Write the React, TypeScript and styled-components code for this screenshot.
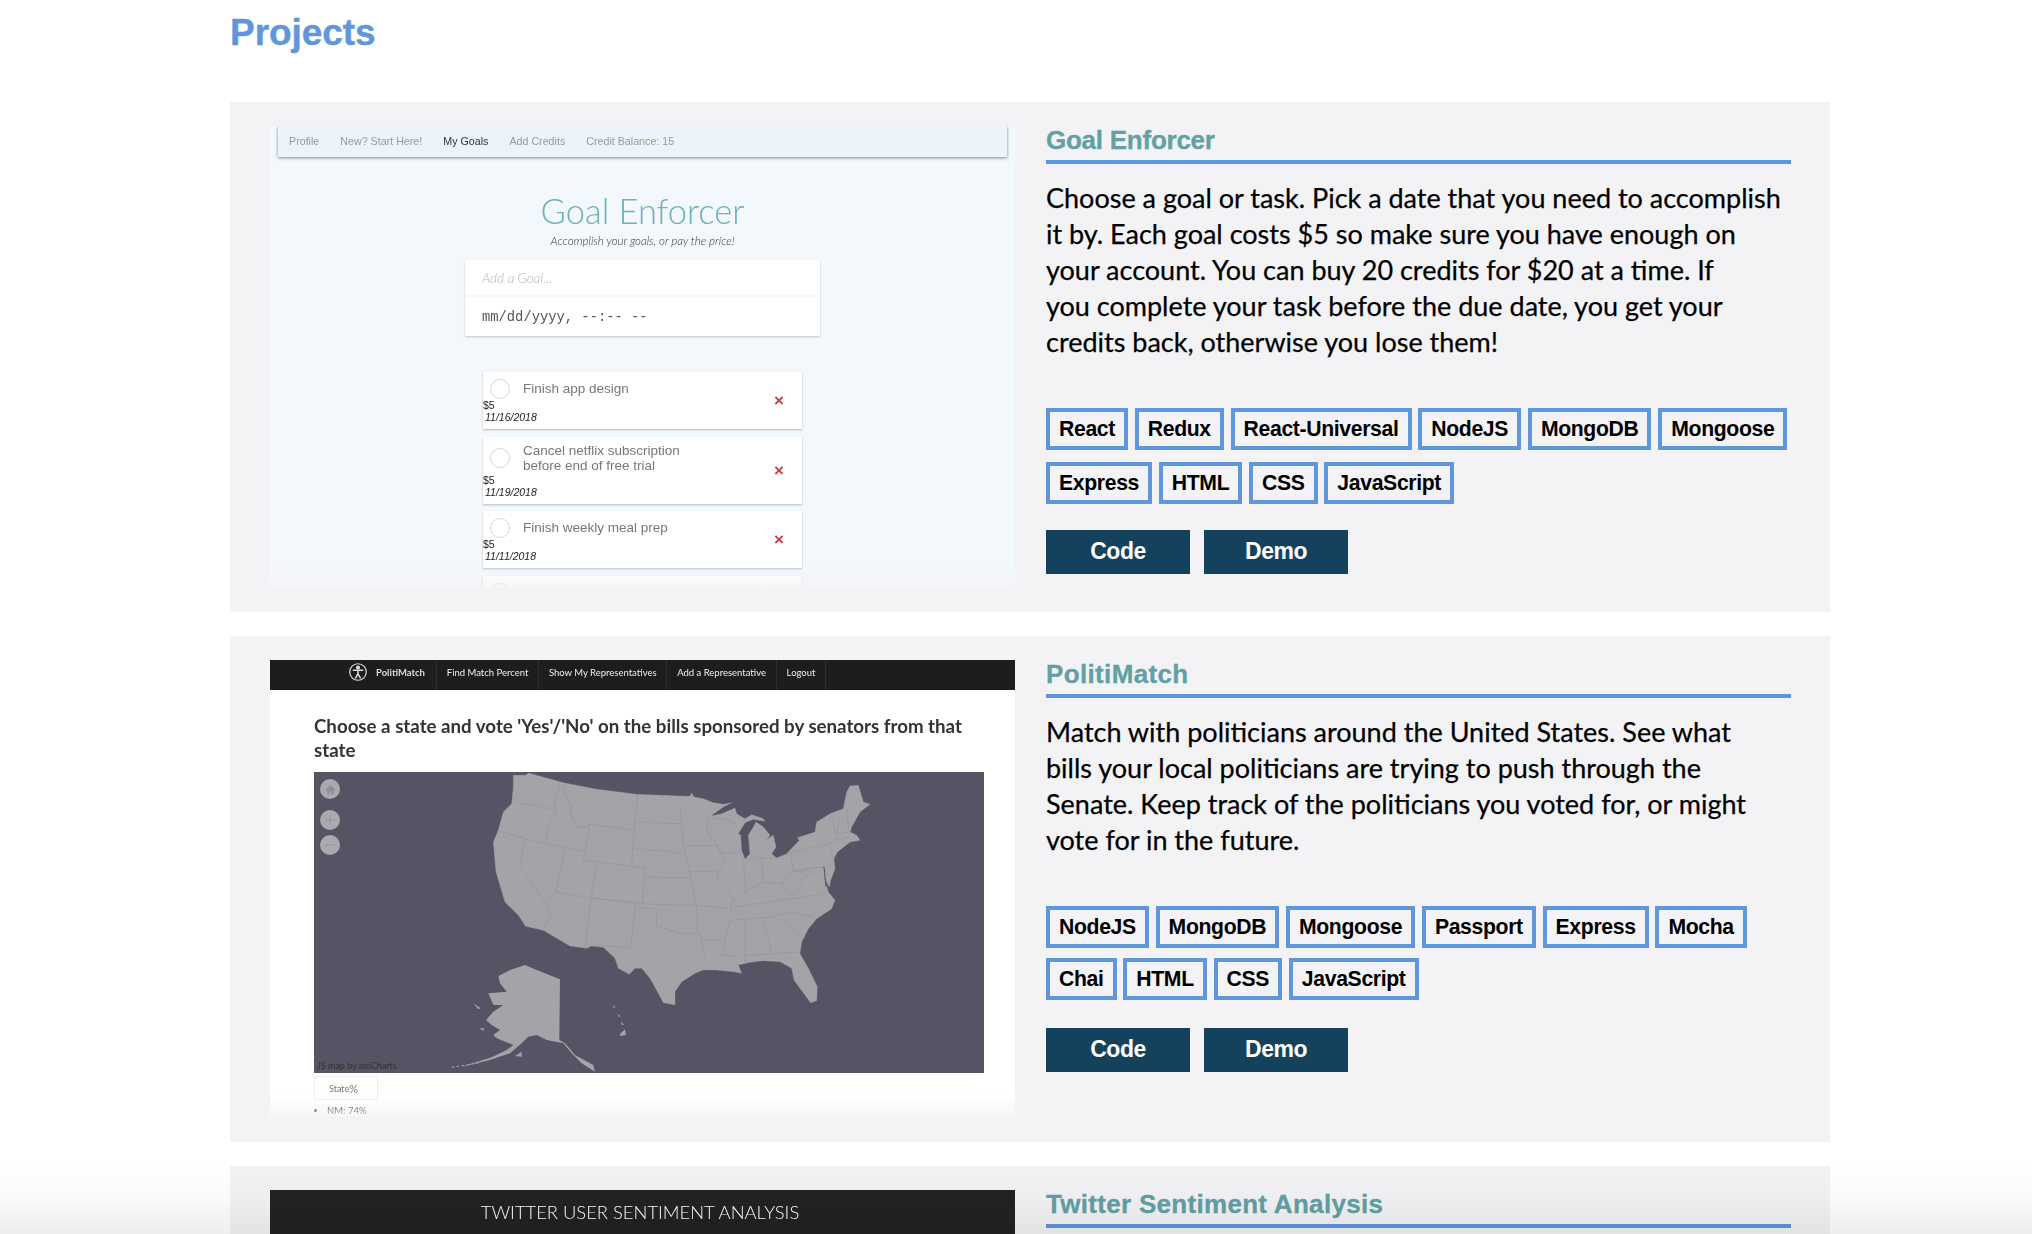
import React from "react";
import styled, { createGlobalStyle } from "styled-components";

const Global = createGlobalStyle`
  html, body { margin: 0; padding: 0; height: 100%; overflow: hidden; background: #fff; }
  #root { height: 1234px; overflow: hidden; }
`;

const Page = styled.main`
  position: relative;
  height: 1234px;
  overflow: hidden;
  padding: 0 202px 0 230px;
  box-sizing: border-box;
  font-family: "Liberation Sans", Arial, sans-serif;
`;
const PageTitle = styled.h1`
  margin: 0;
  height: 102px;
  padding-top: 10px;
  box-sizing: border-box;
  font-size: 37px;
  line-height: 46px;
  font-weight: 700;
  letter-spacing: -0.05px;
  -webkit-text-stroke: 0.4px #5f96dc;
  color: #5f96dc;
`;
const Card = styled.section<{ $h: number }>`
  display: grid;
  grid-template-columns: 745px 745px;
  column-gap: 31px;
  height: ${(p) => p.$h}px;
  margin-bottom: 24px;
  padding: 24px 40px;
  box-sizing: border-box;
  background: #f3f3f6;
`;
const Info = styled.div`
  display: flex;
  flex-direction: column;
  align-items: flex-start;
`;
const Title = styled.h2<{ $ls: number }>`
  align-self: stretch;
  margin: 0;
  height: 38px;
  box-sizing: border-box;
  border-bottom: 4px solid #5f96dc;
  font-size: 26px;
  line-height: 28px;
  font-weight: 700;
  letter-spacing: ${(p) => p.$ls}px;
  -webkit-text-stroke: 0.3px #62a0a4;
  color: #62a0a4;
`;
const Desc = styled.p`
  margin: 16px 0 48px;
  font-family: Lato, sans-serif;
  font-size: 27px;
  line-height: 36px;
  -webkit-text-stroke: 0.25px #000;
  color: #000;
`;
const DescLine = styled.span`
  display: block;
  white-space: nowrap;
`;
const Tags = styled.div<{ $rowGap: number }>`
  display: flex;
  flex-wrap: wrap;
  column-gap: 6.8px;
  row-gap: ${(p) => p.$rowGap}px;
  width: 745px;
`;
const Tag = styled.span`
  display: inline-flex;
  align-items: center;
  height: 42px;
  padding: 0 9px 1px;
  box-sizing: border-box;
  border: 4px solid #5f96dc;
  font-size: 21.2px;
  font-weight: 700;
  letter-spacing: -0.35px;
  color: #000;
`;
const Actions = styled.div<{ $top: number }>`
  display: flex;
  gap: 14px;
  margin-top: ${(p) => p.$top}px;
`;
const Action = styled.a`
  display: flex;
  align-items: center;
  justify-content: center;
  width: 144px;
  height: 44px;
  padding-bottom: 1px;
  box-sizing: border-box;
  background: #14425c;
  color: #fff;
  font-size: 23px;
  font-weight: 700;
  letter-spacing: -0.5px;
`;

/* Shots */
const Shot = styled.div<{ $bg: string; $h: number }>`
  position: relative;
  height: ${(p) => p.$h}px;
  overflow: hidden;
  background: ${(p) => p.$bg};
  filter: blur(0.35px);
`;
const Fade = styled.div`
  position: absolute;
  left: 0;
  right: 0;
  bottom: 0;
  height: 22px;
  background: linear-gradient(to bottom, rgba(243, 243, 246, 0), rgba(243, 243, 246, 0.75));
`;
const GoalNav = styled.nav`
  display: flex;
  gap: 21px;
  align-items: center;
  height: 31px;
  margin: 0 8px;
  padding: 0 11px 2px;
  box-sizing: border-box;
  background: #ecf3fa;
  box-shadow: 0 1px 3px rgba(0, 0, 0, 0.45);
  font-size: 10.7px;
  color: #9a9a9a;
`;
const GoalNavItem = styled.span<{ $active?: boolean }>`
  color: ${(p) => (p.$active ? "#333" : "#9a9a9a")};
`;
const GoalHeading = styled.div`
  margin-top: 34px;
  text-align: center;
  font-family: Lato, sans-serif;
  font-weight: 300;
  font-size: 34.5px;
  line-height: 40px;
  color: #6db0be;
`;
const GoalTag = styled.div`
  margin-top: 3px;
  text-align: center;
  font-family: Lato, sans-serif;
  font-style: italic;
  font-weight: 300;
  font-size: 11.5px;
  line-height: 14px;
  color: #333;
`;
const GoalForm = styled.div`
  width: 355px;
  height: 76px;
  margin: 12px auto 0;
  background: #fff;
  box-shadow: 0 1px 2px rgba(0, 0, 0, 0.2);
`;
const GoalInput = styled.div`
  display: flex;
  align-items: center;
  height: 35px;
  padding: 0 17px;
  border-bottom: 2px solid #f7f8f9;
  font-family: Lato, sans-serif;
  font-style: italic;
  font-weight: 300;
  font-size: 13.5px;
  color: #b5b5b5;
`;
const GoalDate = styled.div`
  display: flex;
  align-items: center;
  height: 39px;
  padding: 2px 17px 0;
  box-sizing: border-box;
  font-family: "Liberation Mono", monospace;
  font-size: 13.8px;
  color: #555;
`;
const GoalList = styled.div`
  display: flex;
  flex-direction: column;
  gap: 7.5px;
  width: 319px;
  margin: 36px auto 0;
`;
const GoalRow = styled.div<{ $h: number; $partial?: boolean }>`
  display: flex;
  align-items: ${(p) => (p.$partial ? "flex-start" : "center")};
  justify-content: space-between;
  height: ${(p) => p.$h}px;
  padding-top: ${(p) => (p.$partial ? 7 : 0)}px;
  box-sizing: border-box;
  flex: none;
  background: #fff;
  box-shadow: 0 1px 2px rgba(0, 0, 0, 0.25);
`;
const GoalLeft = styled.div`
  display: flex;
  flex-direction: column;
`;
const GoalHead = styled.div`
  display: flex;
  align-items: center;
  gap: 13px;
  padding-left: 7px;
`;
const Radio = styled.span`
  flex: none;
  width: 20px;
  height: 20px;
  box-sizing: border-box;
  border: 1px solid #d8d8d8;
  border-radius: 50%;
`;
const GoalText = styled.span`
  font-size: 13.5px;
  line-height: 15.5px;
  color: #777;
`;
const GoalPrice = styled.span`
  font-size: 10.5px;
  line-height: 12px;
  color: #222;
`;
const GoalDue = styled.span`
  padding-left: 2px;
  font-size: 10.5px;
  font-style: italic;
  line-height: 12px;
  color: #222;
`;
const GoalX = styled.span`
  margin-right: 18px;
  font-size: 17px;
  line-height: 17px;
  font-weight: 700;
  color: #cc3b45;
`;
const PoliBar = styled.nav`
  display: flex;
  height: 30px;
  padding-left: 79px;
  background: #1c1d1d;
  color: #eee;
  font-family: Lato, sans-serif;
  font-size: 9.5px;
`;
const PoliBrand = styled.span`
  display: flex;
  align-items: center;
  gap: 9px;
  padding: 0 11px 6px 0;
  font-weight: 700;
  color: #ddd;
  border-right: 1px solid #2d2e2e;
`;
const PoliItem = styled.span`
  display: flex;
  align-items: center;
  padding: 0 9.8px 6px;
  border-right: 1px solid #2d2e2e;
`;
const PoliBody = styled.div`
  padding: 24px 31px 0 44px;
`;
const PoliHeading = styled.h3`
  margin: 0 0 10px;
  font-family: Lato, sans-serif;
  font-weight: 700;
  font-size: 18.7px;
  line-height: 24px;
  color: #333;
`;
const MapBox = styled.div`
  position: relative;
  width: 670px;
  height: 301px;
  background: #545464;
`;
const MapSvg = styled.svg`
  display: block;
  width: 100%;
  height: 100%;
`;
const MapBtn = styled.span<{ $top: number }>`
  position: absolute;
  left: 6px;
  top: ${(p) => p.$top}px;
  width: 20px;
  height: 20px;
  display: flex;
  align-items: center;
  justify-content: center;
  border-radius: 50%;
  background: #a9a9ae;
`;
const MapCredit = styled.span`
  position: absolute;
  left: 3px;
  bottom: 2px;
  font-family: Lato, sans-serif;
  font-size: 9px;
  line-height: 11px;
  color: #333;
`;
const Legend = styled.div`
  display: flex;
  align-items: center;
  width: 64px;
  height: 24px;
  margin-top: 3px;
  padding-left: 14px;
  box-sizing: border-box;
  border: 1px solid #eee;
  border-radius: 2px;
  font-family: Lato, sans-serif;
  font-size: 9px;
  color: #777;
`;
const LegendPct = styled.span`
  font-size: 11px;
`;
const StateList = styled.ul`
  margin: 5px 0 0;
  padding: 0 0 0 13px;
  font-family: Lato, sans-serif;
  font-size: 9.5px;
  line-height: 12px;
  color: #222;
`;
const TwitterBar = styled.div`
  display: flex;
  justify-content: center;
  align-items: center;
  height: 44px;
  padding-right: 5px;
  background: #222;
  color: #fff;
  font-family: Lato, sans-serif;
  font-weight: 300;
  font-size: 18.4px;
`;
const PageFade = styled.div`
  position: absolute;
  left: 0;
  right: 0;
  bottom: 0;
  height: 74px;
  background: linear-gradient(to bottom, rgba(0, 0, 0, 0), rgba(0, 0, 0, 0.02) 50%, rgba(0, 0, 0, 0.065));
  pointer-events: none;
`;

/* Map tracing: every list is in 3x crop coordinates, moved into the one 2010x903 map space. */
const seg = (dx: number, dy: number, pts: string) =>
  pts
    .trim()
    .split(/\s+/)
    .map((p) => {
      const [x, y] = p.split(",").map(Number);
      return `${x + dx},${y + dy}`;
    })
    .join(" ");
const W = (pts: string) => seg(498, 0, pts);
const E = (pts: string) => seg(1098, 0, pts);
const S = (pts: string) => seg(768, 474, pts);
const A = (pts: string) => seg(408, 534, pts);

const US =
  "M" +
  [
    W("100,10 138,10 145,3 250,32 350,52 470,67 600,72"),
    E(
      "30,73 35,63 42,75 70,80 100,92 130,97 155,92 130,105 92,132 125,125 165,108 170,125 195,140 215,128 250,140 255,148 220,142 195,152 175,185 182,190 185,235 195,262 210,245 205,190 220,165 228,150 250,165 270,190 258,203 280,190 288,225 275,245 290,258 320,245 358,205 352,197 405,180 410,150 450,125 490,110 500,60 510,42 535,40 550,90 570,97 540,120 515,165 510,180 530,190 540,205 510,210 472,240 462,260 465,290 452,325 448,345 432,315 445,360 465,385 455,410 410,440 385,470 365,510 360,545"
    ),
    S(
      "690,71 715,115 742,170 740,212 722,218 690,175 672,150 665,115 630,95 580,92 540,97 505,105 515,130 490,125 440,120 400,120 375,130 335,155 315,185 315,225 280,218 265,190 240,145 215,115 195,115 178,133 145,115 135,85 100,52 65,48 50,55 0,48"
    ),
    W("190,475 137,463 115,430 75,390 60,340 48,300 40,210 55,175 70,120 95,95 100,45"),
  ].join(" ") +
  "Z";

const AK =
  "M" +
  A(
    "145,78 180,60 225,45 260,60 330,88 328,270 345,280 375,315 430,345 435,365 395,340 365,310 340,280 290,270 260,255 235,260 215,280 180,310 120,330 30,352 125,322 170,300 190,285 140,265 130,255 150,240 125,225 108,210 130,185 160,165 130,165 115,130 170,125 150,100"
  ) +
  "Z";
const ISLANDS = [
  "510,252 525,238 528,255 510,258",
  "195,318 215,305 215,320",
  "70,160 92,175 85,178",
  "88,235 103,235 100,243",
  "503,192 510,197 507,203",
  "513,213 522,225 515,225",
  "488,167 496,170 492,175",
].map((p) => "M" + A(p) + "Z");

const LINES = [
  W("55,175 135,200 195,214 315,238"),
  W("100,80 118,95 170,100 230,115 210,150 195,214"),
  W("240,30 222,105"),
  W("137,200 118,280 205,405 213,433 190,470"),
  W("255,228 228,360 205,385"),
  W("250,35 255,65 275,105 270,125 290,165 325,165"),
  W("330,157 462,175 455,283 310,264 330,157"),
  W("350,272 333,378"),
  W("495,288 487,393 333,378 228,360"),
  W("333,378 315,530"),
  W("335,378 467,395 452,528 370,520 335,522"),
  W("473,67 462,175"),
  W("465,150 600,155"),
  W("458,230 570,238 600,245"),
  W("455,283 495,288"),
  W("495,315 600,318"),
  W("487,395 600,400"),
  W("467,405 528,410 530,462 570,475 600,485"),
  E("0,105 10,222 28,298 50,400 52,475 65,505 75,560"),
  E("10,222 110,220 135,265 120,290 110,320 140,350 160,385 150,405 155,420"),
  E("28,298 108,298"),
  E("0,318 28,318"),
  E("0,400 50,400 145,408"),
  E("0,482 35,488 52,480"),
  E("65,505 130,505"),
  E("85,130 80,175 110,220 130,245 185,240"),
  E("100,137 150,145 170,160"),
  E("190,262 197,360 160,390"),
  E("190,260 245,255 250,330"),
  E("197,360 250,330 305,335"),
  E("245,258 295,258 332,240 340,297 305,335"),
  E("332,240 445,218 462,260 450,280 340,297"),
  E("445,218 470,200 455,130"),
  E("480,125 470,185"),
  E("500,105 505,170"),
  E("470,185 515,178"),
  E("470,205 510,195"),
  E("165,405 440,365"),
  E("305,335 310,350 340,367 385,305"),
  E("340,297 365,300 385,295 420,320"),
  E("340,297 430,285 445,310"),
  E("150,445 280,435 330,392"),
  E("280,435 330,420 400,435"),
  E("300,435 365,500"),
  E("150,445 125,550 175,552"),
  E("195,445 195,570"),
  E("250,440 275,545"),
  E("195,550 275,545 360,540"),
];

const Projects = [
  {
    title: "Goal Enforcer", ls: -0.25, h: 510, rowGap: 12, top: 26,
    lines: [
      "Choose a goal or task. Pick a date that you need to accomplish",
      "it by. Each goal costs $5 so make sure you have enough on",
      "your account. You can buy 20 credits for $20 at a time. If",
      "you complete your task before the due date, you get your",
      "credits back, otherwise you lose them!",
    ],
    tags: ["React", "Redux", "React-Universal", "NodeJS", "MongoDB", "Mongoose", "Express", "HTML", "CSS", "JavaScript"],
  },
  {
    title: "PolitiMatch", ls: 0.35, h: 506, rowGap: 10, top: 28,
    lines: [
      "Match with politicians around the United States. See what",
      "bills your local politicians are trying to push through the",
      "Senate. Keep track of the politicians you voted for, or might",
      "vote for in the future.",
    ],
    tags: ["NodeJS", "MongoDB", "Mongoose", "Passport", "Express", "Mocha", "Chai", "HTML", "CSS", "JavaScript"],
  },
  { title: "Twitter Sentiment Analysis", ls: 0.3, h: 300, rowGap: 10, top: 28, lines: [], tags: [] },
];

const goals = [
  { text: ["Finish app design"], price: "$5", date: "11/16/2018", h: 57 },
  { text: ["Cancel netflix subscription", "before end of free trial"], price: "$5", date: "11/19/2018", h: 67 },
  { text: ["Finish weekly meal prep"], price: "$5", date: "11/11/2018", h: 57 },
];

function GoalShot() {
  return (
    <Shot $bg="#f3f8fc" $h={462}>
      <GoalNav>
        <GoalNavItem>Profile</GoalNavItem>
        <GoalNavItem>New? Start Here!</GoalNavItem>
        <GoalNavItem $active>My Goals</GoalNavItem>
        <GoalNavItem>Add Credits</GoalNavItem>
        <GoalNavItem>Credit Balance: 15</GoalNavItem>
      </GoalNav>
      <GoalHeading>Goal Enforcer</GoalHeading>
      <GoalTag>Accomplish your goals, or pay the price!</GoalTag>
      <GoalForm>
        <GoalInput>Add a Goal...</GoalInput>
        <GoalDate>mm/dd/yyyy, --:-- --</GoalDate>
      </GoalForm>
      <GoalList>
        {goals.map((g) => (
          <GoalRow key={g.date} $h={g.h}>
            <GoalLeft>
              <GoalHead>
                <Radio />
                <GoalText>
                  {g.text.map((t) => (
                    <div key={t}>{t}</div>
                  ))}
                </GoalText>
              </GoalHead>
              <GoalPrice>{g.price}</GoalPrice>
              <GoalDue>{g.date}</GoalDue>
            </GoalLeft>
            <GoalX>×</GoalX>
          </GoalRow>
        ))}
        <GoalRow $h={12} $partial>
          <GoalHead>
            <Radio />
          </GoalHead>
        </GoalRow>
      </GoalList>
      <Fade />
    </Shot>
  );
}

function PoliShot() {
  return (
    <Shot $bg="#fff" $h={457}>
      <PoliBar>
        <PoliBrand>
          <svg width="18" height="18" viewBox="0 0 24 24" fill="none" stroke="#ddd" strokeWidth="1.6">
            <circle cx="12" cy="12" r="11" />
            <circle cx="12" cy="6" r="2" fill="#ddd" />
            <path d="M5 9.5 L19 9.5 M12 9.5 V14.5 M12 14.5 L8.5 20.5 M12 14.5 L15.5 20.5" strokeWidth="2" />
          </svg>
          PolitiMatch
        </PoliBrand>
        <PoliItem>Find Match Percent</PoliItem>
        <PoliItem>Show My Representatives</PoliItem>
        <PoliItem>Add a Representative</PoliItem>
        <PoliItem>Logout</PoliItem>
      </PoliBar>
      <PoliBody>
        <PoliHeading>Choose a state and vote 'Yes'/'No' on the bills sponsored by senators from that state</PoliHeading>
        <MapBox>
          <MapSvg viewBox="0 0 2010 903" preserveAspectRatio="none">
            <path d={US} fill="#a3a3a8" stroke="#a3a3a8" strokeWidth="1" strokeLinejoin="round" />
            <path d={AK} fill="#a3a3a8" />
            {ISLANDS.map((d) => (
              <path key={d} d={d} fill="#a3a3a8" />
            ))}
            <path d={"M" + A("5,352 90,338")} stroke="#a3a3a8" fill="none" strokeWidth="3" strokeDasharray="8 7" />
            {LINES.map((pts) => (
              <path key={pts} d={"M" + pts} fill="none" stroke="#8e8e95" strokeWidth="1.5" />
            ))}
            <path d={"M" + E("432,285 438,345")} stroke="#545464" fill="none" strokeWidth="3" />
            <path d={"M" + E("472,245 500,225")} stroke="#545464" fill="none" strokeWidth="3" />
          </MapSvg>
          <MapBtn $top={7}>
            <svg width="11" height="11" viewBox="0 0 24 24" fill="#8f8f95">
              <path d="M12 2 L23 13 H19 V23 H14 V16 H10 V23 H5 V13 H1 Z" />
            </svg>
          </MapBtn>
          <MapBtn $top={38}>
            <svg width="12" height="12" viewBox="0 0 24 24" stroke="#8f8f95" strokeWidth="1.5">
              <path d="M12 2 V22 M2 12 H22" />
            </svg>
          </MapBtn>
          <MapBtn $top={63}>
            <svg width="12" height="12" viewBox="0 0 24 24" stroke="#8f8f95" strokeWidth="1.5">
              <path d="M2 12 H22" />
            </svg>
          </MapBtn>
          <MapCredit>JS map by amCharts</MapCredit>
        </MapBox>
        <Legend>
          State<LegendPct>%</LegendPct>
        </Legend>
        <StateList>
          <li>NM: 74%</li>
        </StateList>
      </PoliBody>
      <Fade />
    </Shot>
  );
}

function TwitterShot() {
  return (
    <Shot $bg="#222" $h={252}>
      <TwitterBar>TWITTER USER SENTIMENT ANALYSIS</TwitterBar>
    </Shot>
  );
}

const shots = [<GoalShot key="g" />, <PoliShot key="p" />, <TwitterShot key="t" />];

export default function App() {
  return (
    <>
      <Global />
      <Page>
        <PageTitle>Projects</PageTitle>
        {Projects.map((p, i) => (
          <Card key={p.title} $h={p.h}>
            {shots[i]}
            <Info>
              <Title $ls={p.ls}>{p.title}</Title>
              {p.lines.length > 0 && (
                <>
                  <Desc>
                    {p.lines.map((l) => (
                      <DescLine key={l}>{l}</DescLine>
                    ))}
                  </Desc>
                  <Tags $rowGap={p.rowGap}>
                    {p.tags.map((t) => (
                      <Tag key={t}>{t}</Tag>
                    ))}
                  </Tags>
                  <Actions $top={p.top}>
                    <Action>Code</Action>
                    <Action>Demo</Action>
                  </Actions>
                </>
              )}
            </Info>
          </Card>
        ))}
        <PageFade />
      </Page>
    </>
  );
}
